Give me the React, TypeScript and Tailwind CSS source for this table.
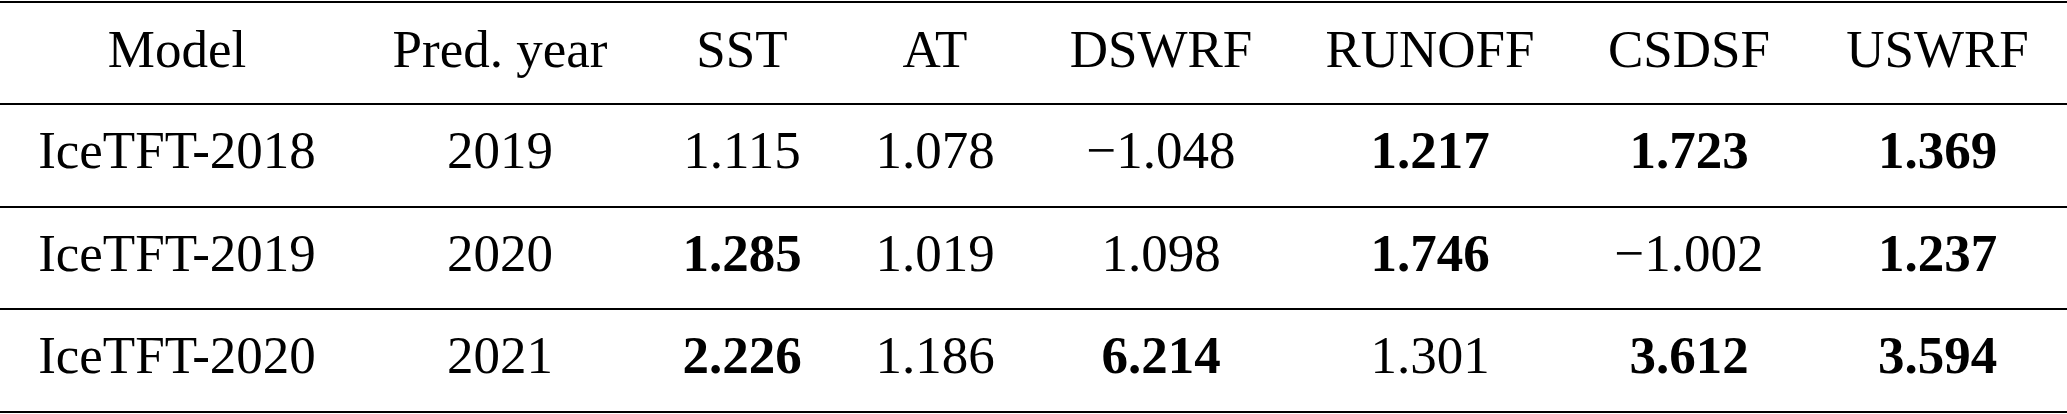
const header = ["Model", "Pred. year", "SST", "AT", "DSWRF", "RUNOFF", "CSDSF", "USWRF"]

type Cell = { v: string; b?: boolean }

const rows: { h: string; cells: Cell[] }[] = [
  {
    h: "h-[103px]",
    cells: [
      { v: "IceTFT-2018" },
      { v: "2019" },
      { v: "1.115" },
      { v: "1.078" },
      { v: "\u22121.048" },
      { v: "1.217", b: true },
      { v: "1.723", b: true },
      { v: "1.369", b: true },
    ],
  },
  {
    h: "h-[102px]",
    cells: [
      { v: "IceTFT-2019" },
      { v: "2020" },
      { v: "1.285", b: true },
      { v: "1.019" },
      { v: "1.098" },
      { v: "1.746", b: true },
      { v: "\u22121.002" },
      { v: "1.237", b: true },
    ],
  },
  {
    h: "h-[103px]",
    cells: [
      { v: "IceTFT-2020" },
      { v: "2021" },
      { v: "2.226", b: true },
      { v: "1.186" },
      { v: "6.214", b: true },
      { v: "1.301" },
      { v: "3.612", b: true },
      { v: "3.594", b: true },
    ],
  },
]

const cols = "grid grid-cols-[354px_292px_192px_194px_258px_280px_238px_259px]"

export default function App() {
  return (
    <div className="w-[2067px] h-[414px] bg-white pt-px text-black font-['Liberation_Serif','Times_New_Roman',serif] text-[53px] leading-none">
      <div className="border-t-2 border-black">
        <div className={`${cols} h-[102px] border-b-2 border-black`}>
          {header.map((h) => (
            <div key={h} className="pt-[20px] text-center whitespace-nowrap">
              {h}
            </div>
          ))}
        </div>
        {rows.map((r, i) => (
          <div key={i} className={`${cols} ${r.h} border-b-2 border-black`}>
            {r.cells.map((c, j) => (
              <div
                key={j}
                className={`pt-[19px] text-center whitespace-nowrap ${c.b ? "font-bold" : ""}`}
              >
                {c.v}
              </div>
            ))}
          </div>
        ))}
      </div>
    </div>
  )
}
